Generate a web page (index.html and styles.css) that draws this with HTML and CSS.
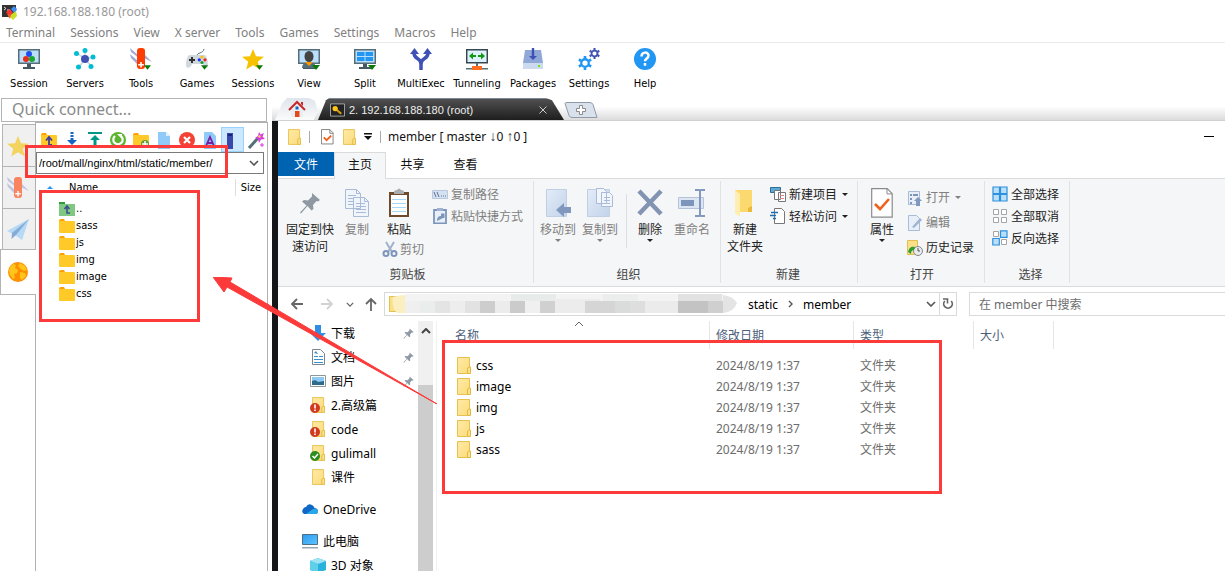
FILE: index.html
```html
<!DOCTYPE html>
<html lang="zh-CN">
<head>
<meta charset="utf-8">
<title>192.168.188.180 (root)</title>
<link rel="stylesheet" href="styles.css">
</head>
<body>
<svg class="defs" aria-hidden="true">
  <defs>
    <linearGradient id="gFold" x1="0" y1="0" x2="1" y2="1"><stop offset="0" stop-color="#ffeaa6"/><stop offset="1" stop-color="#fbdc7c"/></linearGradient>
    <linearGradient id="gScreen" x1="0" y1="0" x2="1" y2="1"><stop offset="0" stop-color="#2c9bf0"/><stop offset="1" stop-color="#5cc4ff"/></linearGradient>
    <linearGradient id="gPage" x1="0" y1="0" x2="1" y2="1"><stop offset="0" stop-color="#e3ecf8"/><stop offset="1" stop-color="#c3d3ea"/></linearGradient>
  </defs>
  <symbol id="monitor" viewBox="0 0 22 22"><path d="M0 1h22v15H0z" fill="#546e7a"/><path d="M1.500 2.500h19v12h-19z" fill="#bbdefb"/><path d="M9 16h4v3H9zM5 19h12v2H5z" fill="#455a64"/></symbol>
  <symbol id="drop" viewBox="0 0 8 5"><path d="M0 0h8L4 5z" fill="#0b7a0b"/></symbol>
  <symbol id="folder" viewBox="0 0 14 17"><path d="M.5.500h12v16H.5z" fill="url(#gFold)" stroke="#e8c04e"/><path d="M10.500 16.500V11l1.500-1h1.500v6.500z" fill="#fbe08a" stroke="#e2b940"/></symbol>
  <symbol id="yfolder" viewBox="0 0 16 14"><path d="M0 2q0-2 2-2h3l1 2h9v6H0z" fill="#ffa000"/><rect y="2" width="16" height="12" rx="1" fill="#ffca28"/></symbol>
  <symbol id="pin" viewBox="0 0 22 22"><path d="M13 1l8 7-2 1.500-1.500-.5-3.500 4 .5 4-2 1.500-4-4.500-6 7-1.500.5.5-1.500 6-6.500L3 9.500l2-1.500 4 .5 4-4z" fill="#8e99a4"/></symbol>
  <symbol id="knife" viewBox="0 0 22 22"><path d="M0 0l9 8v2L1 4zM0 6l9 8v4L1 10zM14 6l8 8-8-4z" fill="#9fa8da"/><rect x="7" y="0" width="8" height="21" rx="3" fill="#ff3d00"/><path d="M10.200 14h1.600v2h2v1.600h-2v2h-1.600v-2h-2V16h2z" fill="#fff"/></symbol>
  <symbol id="star" viewBox="0 0 22 22"><path d="M11 1l3 7.200 8 .5-6.200 5 2 7.800L11 17.200 4.200 21.500l2-7.800L0 8.700l8-.5z" fill="#f6c200"/></symbol>
  <symbol id="docs" viewBox="0 0 26 30"><g fill="#f0f5fc" stroke="#a9bbd6"><path d="M1.500 1.500h11l4 4v15h-15zM9.500 9.500h11l4 4v15h-15z"/><path d="M12.500 1.500v4h4M20.500 9.500v4h4" fill="none"/></g><path d="M4 7.500h8M4 10.500h5M4 13.500h5M4 16.500h5M12 15.500h9M12 18.500h10M12 21.500h10M12 24.500h10" stroke="#a9bbd6"/></symbol>
  <symbol id="caret" viewBox="0 0 6 3"><path d="M0 0h6L3 3z" fill="currentColor"/></symbol>
  <symbol id="chev" viewBox="0 0 10 6"><path d="M1 1l4 4 4-4" fill="none" stroke="currentColor" stroke-width="1.600"/></symbol>
  <symbol id="gear" viewBox="0 0 16 16"><circle cx="8" cy="8" r="4.300" fill="none" stroke="currentColor" stroke-width="2.600"/><g stroke="currentColor" stroke-width="3"><path d="M8 0v3M8 13v3M1 4l2.600 1.500M12.400 10.500L15 12M1 12l2.600-1.500M12.400 5.500L15 4"/></g></symbol>
  <symbol id="check" viewBox="0 0 22 30"><path d="M.7.700h15.500l5 5v23.500H.7z" fill="#fff" stroke="#8a8a8a" stroke-width="1.200"/><path d="M16 .7v5.200h5" fill="none" stroke="#8a8a8a"/><path d="M4 16l5 5L18 11" fill="none" stroke="#f0611c" stroke-width="2.600"/></symbol>
</svg>

<div class="app">
  <header class="titlebar">
    <svg class="i16" viewBox="0 0 16 16"><path d="M0 1h14v12H0z" fill="#333"/><path d="M2 3l2 1.500L2 6M5 6h3" stroke="#ddd" fill="none"/><path d="M4 8l4-3 3 4-4 3z" fill="#f33"/><path d="M9 5l3-3 3 3-2 5z" fill="#3b8ff5"/><path d="M7 12l7-5 1 5-4 4z" fill="#c6e02a"/><path d="M5 10l4 1-1 4z" fill="#ff5a2a"/></svg>
    <span>192.168.188.180 (root)</span>
  </header>
  <nav class="menubar">
    <button>Terminal</button><button>Sessions</button><button>View</button><button>X server</button><button>Tools</button><button>Games</button><button>Settings</button><button>Macros</button><button>Help</button>
  </nav>
  <div class="toolbar">
    <button><svg viewBox="0 0 22 22"><use href="#monitor"/><circle cx="11" cy="6" r="3" fill="#1e50f0"/><circle cx="8" cy="11" r="3" fill="#e53020"/><circle cx="14" cy="11" r="3" fill="#17a82e"/></svg>Session</button>
    <button><svg viewBox="0 0 22 22"><path d="M11 11V3M11 11L3 5M11 11l8-2M11 11L5 19M11 11l6 7" stroke="#c5d5dd" stroke-width="1.500"/><circle cx="11" cy="11" r="4" fill="#3f51b5"/><g fill="#00bcd4"><circle cx="11" cy="2.500" r="2.500"/><circle cx="2.500" cy="5.500" r="2.500"/><circle cx="19" cy="9" r="2.500"/><circle cx="4.500" cy="19" r="2.500"/><circle cx="17" cy="18.500" r="2.500"/></g></svg>Servers</button>
    <button><svg viewBox="0 0 22 22"><use href="#knife"/><use href="#drop" x="14" y="17" width="7" height="5"/></svg>Tools</button>
    <button><svg viewBox="0 0 22 22"><path d="M11 8c0-4 6-2 7-7" fill="none" stroke="#546e7a"/><path d="M4 7h14c3 0 4 6 4 11 0 3-4 2-5-2H6c-1 4-5 5-6 2 0-5 1-11 4-11z" fill="#cfd8dc"/><path d="M5 9h2v2h2v2H7v2H5v-2H3v-2h2z" fill="#333"/><circle cx="16" cy="9" r="1.600" fill="#ffc107"/><circle cx="13.300" cy="11.800" r="1.600" fill="#2030ff"/><circle cx="19" cy="11.800" r="1.600" fill="#e22"/><circle cx="16" cy="14.500" r="1.600" fill="#17a02e"/><use href="#drop" x="15" y="17" width="7" height="5"/></svg>Games</button>
    <button><svg viewBox="0 0 22 22"><use href="#star"/><use href="#drop" x="14" y="17" width="7" height="5"/></svg>Sessions</button>
    <button><svg viewBox="0 0 22 22"><use href="#monitor"/><path d="M4 20q0-6 7-6t7 6z" fill="#546e7a"/><path d="M7 14h8l-4 4z" fill="#ff9800"/><ellipse cx="11" cy="8.500" rx="4.500" ry="5.500" fill="#424242"/><use href="#drop" x="14" y="17" width="8" height="5"/></svg>View</button>
    <button><svg viewBox="0 0 22 22"><use href="#monitor"/><path d="M3 4h7.500v4H3zM11.500 4H19v4h-7.500zM3 9h7.500v4H3zM11.500 9H19v4h-7.500z" fill="#2196f3"/><use href="#drop" x="14" y="17" width="8" height="5"/></svg>Split</button>
    <button><svg viewBox="0 0 22 22"><path d="M4 5c0 7 7 4 7 11v6V16c0-7 7-4 7-11" fill="none" stroke="#3f51b5" stroke-width="3.500"/><path d="M0 6l4.500-6L9 6zM13 6l4.500-6L22 6z" fill="#3f51b5"/></svg>MultiExec</button>
    <button><svg viewBox="0 0 22 22"><path d="M.7 1.700h20.600v13H.7z" fill="#dff0ff" stroke="#37474f" stroke-width="1.500"/><path d="M3 8l4-3.500V7h3v2H7v2.500zM19 8l-4-3.500V7h-3v2h3v2.500z" fill="#109a10"/><path d="M10 15h2v4h-2zM0 20h22v1.500H0z" fill="#546e7a"/><path d="M6 18h10v4H6z" fill="#ff6d1f"/></svg>Tunneling</button>
    <button><svg viewBox="0 0 22 22"><path d="M3 2h16l2 13H1z" fill="#90a8d8"/><path d="M1 15h20v6H1z" fill="#cdd9ef"/><path d="M9.800 0h2.400v8H15l-4 4-4-4h2.800z" fill="#3f51b5"/><path d="M16 17h2v2h-2z" fill="#6e1"/></svg>Packages</button>
    <button><svg viewBox="0 0 22 22"><use href="#gear" x="0" y="8" width="14" height="14" color="#2196f3"/><use href="#gear" x="11" y="0" width="11" height="11" color="#3f51b5"/></svg>Settings</button>
    <button><svg viewBox="0 0 22 22"><circle cx="11" cy="11" r="11" fill="#2196f3"/><path d="M7.500 8.500c0-5 7-5 7-1 0 3-3.500 3-3.500 5.800M11 15v2.800" fill="none" stroke="#fff" stroke-width="2.500"/></svg>Help</button>
  </div>

  <div class="work">
    <aside class="left">
      <input class="quick" type="text" placeholder="Quick connect..." aria-label="Quick connect">
      <div class="leftbody">
        <div class="vtabs">
          <button aria-label="Favourites"><svg viewBox="0 0 22 22"><use href="#star"/></svg></button>
          <button aria-label="Tools"><svg viewBox="0 0 22 22"><use href="#knife"/></svg></button>
          <button aria-label="Macros"><svg viewBox="0 0 22 22"><path d="M0 12L22 0 15 21l-7-5z" fill="#90caf9"/><path d="M22 0L5 14l-.5 6L9 16z" fill="#3f7fc8"/></svg></button>
          <button class="on" aria-label="Sftp"><svg viewBox="0 0 22 22"><circle cx="11" cy="11" r="10" fill="#ff8f00"/><path d="M3 6l3-3 3 1-1 3 3 2-1 3-3 1 1 4-2 1-3-4-1-4zM13 2l5 3 2 4-3 1-3-2-3-3zM13 11l5 1 1 3-4 4-2-2z" fill="#ffc51a"/></svg></button>
        </div>
        <div class="sftp">
          <div class="sftpbar">
            <button aria-label="Up"><svg viewBox="0 0 18 18"><use href="#yfolder" x="1" y="2" width="16" height="14"/><path d="M12 14H9V7M6 9.500L9 6l3 3.500" fill="none" stroke="#3c3f9c" stroke-width="1.800"/></svg></button>
            <button aria-label="Download"><svg viewBox="0 0 18 18"><path d="M9 1v8" stroke="#1565c0" stroke-width="3" stroke-dasharray="2 1"/><path d="M4 9h10l-5 5zM4 15h10v1H4z" fill="#1565c0"/></svg></button>
            <button aria-label="Upload"><svg viewBox="0 0 18 18"><path d="M2 1h14v2H2zM9 4l5 5h-3.500v7h-3V9H4z" fill="#009688"/></svg></button>
            <button aria-label="Refresh"><svg viewBox="0 0 18 18"><circle cx="9" cy="9" r="8" fill="#5cb531"/><path d="M6 5a4.700 4.700 0 1 0 6 0" fill="none" stroke="#fff" stroke-width="2.200"/><path d="M8 3h5v5z" fill="#fff"/></svg></button>
            <button aria-label="New folder"><svg viewBox="0 0 18 18"><use href="#yfolder" x="1" y="2" width="16" height="14"/><circle cx="13" cy="13" r="4" fill="#5f9c3a"/><path d="M13 10v6M10 13h6" stroke="#fff" stroke-width="1.500"/></svg></button>
            <button aria-label="New file"><svg viewBox="0 0 18 18"><path d="M3 1h8l4 4v13H3z" fill="#90caf9"/><path d="M11 1v4h4z" fill="#e1f0ff"/></svg></button>
            <button aria-label="Delete"><svg viewBox="0 0 18 18"><circle cx="9" cy="9" r="8" fill="#f44336"/><path d="M6 6l6 6M12 6l-6 6" stroke="#fff" stroke-width="2.200"/></svg></button>
            <button aria-label="Rename"><svg viewBox="0 0 18 18"><path d="M3 1h8l4 4v13H3z" fill="#90caf9"/><path d="M5 15l4-9 4 9M6.500 12h5" fill="none" stroke="#7b1fa2" stroke-width="1.800"/></svg></button>
            <button class="on" aria-label="Terminal"><svg viewBox="0 0 18 18"><path d="M3 2h6v16H3z" fill="#3949ab"/><path d="M4 3h4v2H4z" fill="#1a237e"/></svg></button>
            <button aria-label="Wand"><svg viewBox="0 0 18 18"><path d="M2 17L11 7" stroke="#546e7a" stroke-width="3"/><path d="M12 1l1.500 2.500L17 2l-1.500 3.500L18 8l-4 .5L12 12l-1-4-3-1 3-2z" fill="#d63be0"/><path d="M12 4l2 1-1 2-2-1z" fill="#ffd54f"/><path d="M15 12v4M13 14h4" stroke="#d63be0"/></svg></button>
          </div>
          <div class="path"><input type="text" value="/root/mall/nginx/html/static/member/" aria-label="Path"><svg class="pathchev"><use href="#chev"/></svg></div>
          <div class="sftphead"><svg viewBox="0 0 6 3"><path d="M0 3h6L3 0z" fill="#2196f3"/></svg><span class="name">Name</span><span class="size">Size</span></div>
          <ul class="sftplist">
            <li><svg viewBox="0 0 16 14"><path d="M0 0h6v3H0z" fill="#2e9a3c"/><path d="M0 2h16v12H0z" fill="#81c784"/><path d="M11 11H8V5M5.500 7L8 4l2.500 3" fill="none" stroke="#3c4f8c" stroke-width="1.600"/></svg>..</li>
            <li><svg><use href="#yfolder"/></svg>sass</li>
            <li><svg><use href="#yfolder"/></svg>js</li>
            <li><svg><use href="#yfolder"/></svg>img</li>
            <li><svg><use href="#yfolder"/></svg>image</li>
            <li><svg><use href="#yfolder"/></svg>css</li>
          </ul>
        </div>
      </div>
    </aside>

    <main class="right">
      <div class="tabs">
        <button class="tab home" aria-label="Home"><svg viewBox="0 0 18 18"><path d="M3 9h12v8H3z" fill="#e8eef2"/><path d="M1 10l8-8 8 8" fill="none" stroke="#c62828" stroke-width="2"/><path d="M13 2h2v4l-2-2z" fill="#c62828"/><path d="M7 11h4.500v6H7z" fill="#e64a19"/><path d="M7.500 6.500h3v3h-3z" fill="#1565c0"/></svg></button>
        <button class="tab active"><svg viewBox="0 0 16 14"><path d="M.5.500h15v13H.5z" fill="#222" stroke="#a8a8a8"/><path d="M6 6l6 5" stroke="#d99a14" stroke-width="2.200"/><circle cx="5.500" cy="5.500" r="2.800" fill="#ffc61a"/></svg><span>2. 192.168.188.180 (root)</span><svg class="x" viewBox="0 0 8 8"><path d="M.5.500l7 7M7.500.500l-7 7" stroke="#ccc"/></svg></button>
        <button class="tab plus" aria-label="New tab"><svg viewBox="0 0 34 16"><path d="M1 1.500q0-1 2-1h23q2 0 3 2l4 13H8q-2 0-3-2z" fill="#d9e2ec" stroke="#8f9aa6"/><path d="M15.500 3.500h3v3h3v3h-3v3h-3v-3h-3v-3h3z" fill="#fff" stroke="#8b8b8b"/></svg></button>
      </div>

      <section class="explorer">
        <div class="exptitle">
          <svg class="f"><use href="#folder"/></svg><i class="bar"></i>
          <svg class="ck" viewBox="0 0 14 17"><path d="M.5.500h9l3.500 3.500v12H.5z" fill="#fff" stroke="#7d7d7d"/><path d="M9.500.500v4H13" fill="none" stroke="#7d7d7d"/><path d="M3 9l3 3 5-5" fill="none" stroke="#f0611c" stroke-width="2"/></svg>
          <svg class="f"><use href="#folder"/></svg>
          <svg class="qd" viewBox="0 0 8 7"><path d="M0 0h8v1.500H0zM0 3h8L4 7z" fill="#111"/></svg><i class="bar"></i>
          <span class="ttl">member [ master <span class="ar">↓</span>0 <span class="ar">↑</span>0 ]</span>
          <button class="min" aria-label="Minimize"></button>
        </div>
        <div class="rtabs"><button class="file">文件</button><button class="cur">主页</button><button>共享</button><button>查看</button></div>

        <div class="ribbon">
          <div class="grp g1">
            <div class="gc">
              <button class="big w56"><svg class="sq"><use href="#pin"/></svg>固定到快<br>速访问</button>
              <button class="big w38 off"><svg><use href="#docs"/></svg>复制</button>
              <div class="col paste">
                <button class="big w46"><svg viewBox="0 0 22 30"><path d="M1 4h20v25H1z" fill="#6d4a2c"/><path d="M3 7h16v20H3z" fill="#fff"/><path d="M6 4q0-2 3-2 2-3 4 0 3 0 3 2v2H6z" fill="#a9adb2"/><path d="M4 11.500h14M4 15.500h14M4 19.500h14M4 23.500h14" stroke="#a7d8f5"/></svg>粘贴</button>
                <button class="sm off"><svg viewBox="0 0 16 16"><path d="M4 1l6 10M12 1L6 11" stroke="#9fb1cc" stroke-width="2"/><g fill="none" stroke="#7e95bb" stroke-width="2"><circle cx="4" cy="12.500" r="2.500"/><circle cx="12" cy="12.500" r="2.500"/></g></svg>剪切</button>
              </div>
              <div class="col stack">
                <button class="sm off"><svg viewBox="0 0 16 16"><path d="M.5 4.500h15v8H.5z" fill="#d5e0f0" stroke="#b9c8df"/><path d="M2 6l2 5M5 6l2 5M9 10h1M11 10h1M13 10h1" stroke="#5f7597"/></svg>复制路径</button>
                <button class="sm off"><svg viewBox="0 0 16 16"><path d="M2 2h12v13.500H2z" fill="#e8eff8" stroke="#7e95bb" stroke-width="1.800"/><path d="M5 0h6v3H5z" fill="#9fb1cc"/><path d="M5 13c0-4 2-5 4-5V5.500h3.500V10H11" fill="#7e95bb"/></svg>粘贴快捷方式</button>
              </div>
            </div>
            <div class="gl">剪贴板</div>
          </div>
          <div class="grp g2">
            <div class="gc">
              <button class="big w42 off"><svg viewBox="0 0 26 30"><path d="M1.500 1.500h20v27h-20z" fill="url(#gPage)" stroke="#c0cfe4"/><path d="M11 22l8-7v4h7v6h-7v4z" fill="#8098bd"/></svg>移动到<svg class="car"><use href="#caret"/></svg></button>
              <button class="big w42 off"><svg viewBox="0 0 26 30"><path d="M.5 1.500h22v27H.5z" fill="url(#gPage)" stroke="#c0cfe4"/><path d="M9.500.500h7l3 3v12h-10zM14.500 4.500h8l3 3v11h-11z" fill="#f2f6fc" stroke="#a9bbd6"/><path d="M17 9.500h6M17 12.500h6M17 15.500h6" stroke="#a9bbd6"/></svg>复制到<svg class="car"><use href="#caret"/></svg></button>
              <i class="vbar"></i>
              <button class="big w46"><svg viewBox="0 0 26 30"><path d="M2 3l22 23M24 3L2 26" stroke="#8294b2" stroke-width="4.500"/></svg>删除<svg class="car"><use href="#caret"/></svg></button>
              <button class="big w38 off"><svg class="wide" viewBox="0 0 28 30"><path d="M.5 9.500h25v11H.5z" fill="#dce6f3" stroke="#b4c3da"/><path d="M3 12h13v6H3z" fill="#7e95bb"/><path d="M17 2h4q1 0 1 2v22q0 2-1 2h-4M27 2h-4q-1 0-1 2M27 28h-4q-1 0-1-2" fill="none" stroke="#8299bd" stroke-width="2"/></svg>重命名</button>
            </div>
            <div class="gl">组织</div>
          </div>
          <div class="grp g3">
            <div class="gc">
              <button class="big w44"><svg viewBox="0 0 22 30"><path d="M1 2h17v22H1z" fill="#fbd96f"/><path d="M1 2l5 4v23l-5-4z" fill="#ffeeb0"/><path d="M14 20l4-2v6h-4z" fill="#e9b93c"/></svg>新建<br>文件夹</button>
              <div class="col tight">
                <button class="sm"><svg viewBox="0 0 16 16"><path d="M.5 1.500h10v5H.5z" fill="#5aa9d8" stroke="#2f6f96"/><path d="M4.500 4.500h6v9h-6zM8.500 6.500h7v9h-7z" fill="#fff" stroke="#777"/><path d="M10 9.500h4M10 12.500h4" stroke="#d88"/></svg>新建项目<svg class="car"><use href="#caret"/></svg></button>
                <button class="sm"><svg viewBox="0 0 16 16"><path d="M4.500.500h7l3 3v12h-10z" fill="#fff" stroke="#777"/><path d="M1 4.500h7M0 7.500h6M3 10.500h3" stroke="#1d6fb8" stroke-width="1.500"/></svg>轻松访问<svg class="car"><use href="#caret"/></svg></button>
              </div>
            </div>
            <div class="gl">新建</div>
          </div>
          <div class="grp g4">
            <div class="gc">
              <button class="big w44"><svg><use href="#check"/></svg>属性<svg class="car"><use href="#caret"/></svg></button>
              <div class="col loose">
                <button class="sm off"><svg viewBox="0 0 16 16"><path d="M1.500 1.500h11v13h-11z" fill="#e8eff8" stroke="#a9bbd6"/><path d="M3 4h2v2H3zM3 8h2v2H3zM3 12h2v2H3zM6 4h5v2H6z" fill="#7e95bb"/><path d="M7 11l4-4 4 4h-2v5H9v-5z" fill="#8098bd"/></svg>打开<svg class="car"><use href="#caret"/></svg></button>
                <button class="sm off"><svg viewBox="0 0 16 16"><path d="M1.500.500h8l3 3v12h-11z" fill="#e8eff8" stroke="#a9bbd6"/><path d="M5 12l8-9 2 2-8 8z" fill="#9fb4d3"/></svg>编辑</button>
                <button class="sm"><svg viewBox="0 0 16 16"><path d="M.5.500h10v14H.5z" fill="#fbe08a" stroke="#e2c050"/><circle cx="11" cy="11" r="4.500" fill="#e9ecee" stroke="#888"/><path d="M11 8v3h2" fill="none" stroke="#555"/><path d="M1 12c1-5 4-6 7-5l-1 3c-2 0-3 1-3 4z" fill="#2f9e2f"/></svg>历史记录</button>
              </div>
            </div>
            <div class="gl">打开</div>
          </div>
          <div class="grp g5">
            <div class="gc">
              <div class="col sel">
                <button class="sm"><svg viewBox="0 0 16 16"><path d="M1 1h6.500v6.500H1zM8.500 1H15v6.500H8.500zM1 8.500h6.500V15H1zM8.500 8.500H15V15H8.500z" fill="#b9e0fb" stroke="#2e8fdc" stroke-width="1.200"/></svg>全部选择</button>
                <button class="sm"><svg viewBox="0 0 16 16"><path d="M1.500 1.500h5v5h-5zM9.500 1.500h5v5h-5zM1.500 9.500h5v5h-5zM9.500 9.500h5v5h-5z" fill="#fff" stroke="#a5a5a5"/></svg>全部取消</button>
                <button class="sm"><svg viewBox="0 0 16 16"><path d="M1.500 1.500h5v5h-5zM9.500 9.500h5v5h-5z" fill="#fff" stroke="#a5a5a5"/><path d="M8.500.800H15v6.500H8.500zM.8 8.500h6.500V15H.8z" fill="#b9e0fb" stroke="#2e8fdc" stroke-width="1.200"/></svg>反向选择</button>
              </div>
            </div>
            <div class="gl">选择</div>
          </div>
        </div>

        <div class="navrow">
          <div class="navbtns">
            <button aria-label="Back"><svg viewBox="0 0 14 14"><path d="M13 7H2M7 2L2 7l5 5" fill="none" stroke="#666" stroke-width="1.800"/></svg></button>
            <button aria-label="Forward"><svg viewBox="0 0 14 14"><path d="M1 7h11M7 2l5 5-5 5" fill="none" stroke="#d2d2d2" stroke-width="1.800"/></svg></button>
            <button class="nar" aria-label="Recent"><svg class="mini" viewBox="0 0 10 6"><use href="#chev" width="10" height="6"/></svg></button>
            <button aria-label="Up one level"><svg viewBox="0 0 14 14"><path d="M7 14V2M2 7l5-5 5 5" fill="none" stroke="#666" stroke-width="1.800"/></svg></button>
          </div>
          <div class="addr">
            <svg class="mosaic" viewBox="0 0 350 20">
              <path d="M.5 2.500h8v15h-8z" fill="#fbe08a" stroke="#e2c050"/><path d="M4 3q6-2 12-2v18H8q-6-6-4-16z" fill="#fbeebf"/>
              <path d="M16 0h318v8H16z" fill="#f3f3f3"/><path d="M122 0h45v8h-45z" fill="#e7eceb"/><path d="M214 0h35v8h-35z" fill="#eceeee"/><path d="M289 0h44v8h-44z" fill="#e2e2e2"/>
              <path d="M16 7h15v12H16z" fill="#efefef"/><path d="M31 7h15v12H31z" fill="#e9eeed"/><path d="M46 7h15v12H46z" fill="#e4e4e4"/><path d="M61 7h15v12H61z" fill="#ededed"/><path d="M76 7h15v12H76z" fill="#e2e2e2"/><path d="M91 7h15v12H91z" fill="#cdcdcd"/><path d="M106 7h15v12h-15z" fill="#ececec"/><path d="M121 7h15v12h-15z" fill="#cbcbcb"/><path d="M136 7h15v12h-15z" fill="#f0f0f0"/><path d="M166 5h45v14h-45z" fill="#ececec"/><path d="M151 7h15v12h-15z" fill="#d0d0d0"/><path d="M196 7h30v12h-30z" fill="#d5d5d5"/><path d="M226 7h15v12h-15z" fill="#dadcdc"/><path d="M241 7h15v12h-15z" fill="#dedede"/><path d="M256 7h33v12h-33z" fill="#ebebeb"/><path d="M289 7h30v12h-30z" fill="#c3c3c3"/><path d="M319 7h15v12h-15z" fill="#cfcfcf"/><path d="M334 1q10 1 14 8-3 9-14 10z" fill="#e4e4e4"/>
            </svg>
            <span>static</span><svg class="sep" viewBox="0 0 5 8"><path d="M1 1l3 3-3 3" fill="none" stroke="#555" stroke-width="1.400"/></svg><span>member</span>
            <button class="ddl" aria-label="History"><svg viewBox="0 0 10 6"><use href="#chev" width="10" height="6"/></svg></button>
            <button class="rf" aria-label="Refresh"><svg viewBox="0 0 12 12"><path d="M2.800 3a4.300 4.300 0 1 0 6.400 0" fill="none" stroke="#666" stroke-width="1.700"/><path d="M1 1h4.500v4.500" fill="none" stroke="#666" stroke-width="1.600"/></svg></button>
          </div>
          <input class="search" type="text" placeholder="在 member 中搜索" aria-label="搜索">
        </div>

        <div class="expbody">
          <ul class="tree">
            <li><svg viewBox="0 0 16 18"><path d="M5 1h6v8h5l-8 8-8-8h5z" fill="#2f8fe4"/></svg>下载<svg class="pn"><use href="#pin"/></svg></li>
            <li><svg viewBox="0 0 16 18"><path d="M2.500 1.500h8l4 4v11h-12z" fill="#fff" stroke="#7d868d"/><path d="M4 8.500h4M4 11.500h9M4 14.500h9M9 8.500h4" stroke="#3a8fce"/><path d="M4 5l2-2 2 3z" fill="#3a8fce"/></svg>文档<svg class="pn"><use href="#pin"/></svg></li>
            <li><svg viewBox="0 0 16 18"><path d="M.5 3.500h15v11H.5z" fill="#fff" stroke="#8d969c"/><path d="M2 5h12v8H2z" fill="#8ec9f5"/><path d="M2 9q4-2 6 1l6-1v4H2z" fill="#2e6b8a"/></svg>图片<svg class="pn"><use href="#pin"/></svg></li>
            <li><svg viewBox="0 0 16 18"><use href="#folder" x="2" y="1" width="13" height="16"/><circle cx="5" cy="12" r="5" fill="#d03a1e"/><path d="M4.200 8.500h1.600v4H4.200zM4.200 13.500h1.600v1.500H4.200z" fill="#fff"/></svg>2.高级篇</li>
            <li><svg viewBox="0 0 16 18"><use href="#folder" x="2" y="1" width="13" height="16"/><circle cx="5" cy="12" r="5" fill="#d03a1e"/><path d="M4.200 8.500h1.600v4H4.200zM4.200 13.500h1.600v1.500H4.200z" fill="#fff"/></svg>code</li>
            <li><svg viewBox="0 0 16 18"><use href="#folder" x="2" y="1" width="13" height="16"/><circle cx="5" cy="12" r="5" fill="#2e8b1e"/><path d="M2.500 12l2 2 3.500-4" fill="none" stroke="#fff" stroke-width="1.500"/></svg>gulimall</li>
            <li><svg viewBox="0 0 16 18"><use href="#folder" x="2" y="1" width="13" height="16"/></svg>课件</li>
            <li class="root"><svg viewBox="0 0 16 18"><path d="M2 14q-3-2-1-5 1-2 3-2 2-4 6-2 2 1 2.500 3 3 0 3.500 3 0 3-3 3z" fill="#0f68c4"/><path d="M4 14l7-5q4-1 5 2 0 3-3 3z" fill="#28a8ea"/></svg>OneDrive</li>
            <li class="root"><svg viewBox="0 0 16 18"><path d="M.5 2.500h15v10H.5z" fill="url(#gScreen)" stroke="#4f6f87"/><path d="M0 15h16v1.500H0z" fill="#9aa7b1"/></svg>此电脑</li>
            <li><svg viewBox="0 0 16 18"><path d="M0 5l8-3 8 3v9l-8 3-8-3z" fill="#27b3dc"/><path d="M0 5l8-3 8 3-8 3z" fill="#9fe4f5"/><path d="M0 5l8 3v9l-8-3z" fill="#5fd0ea"/></svg>3D 对象</li>
          </ul>
          <div class="scroll"><svg viewBox="0 0 10 6"><path d="M1 5l4-4 4 4" fill="none" stroke="#444" stroke-width="2"/></svg><i></i></div>
          <div class="files">
            <table>
              <colgroup><col class="c1"><col class="c2"><col class="c3"><col class="c4"><col></colgroup>
              <thead><tr><th>名称<svg class="sort" viewBox="0 0 10 6"><path d="M1 5l4-4 4 4" fill="none" stroke="#666"/></svg></th><th>修改日期</th><th>类型</th><th>大小</th><th class="last"></th></tr></thead>
              <tbody>
                <tr><td><svg><use href="#folder"/></svg>css</td><td>2024/8/19 1:37</td><td>文件夹</td><td></td><td></td></tr>
                <tr><td><svg><use href="#folder"/></svg>image</td><td>2024/8/19 1:37</td><td>文件夹</td><td></td><td></td></tr>
                <tr><td><svg><use href="#folder"/></svg>img</td><td>2024/8/19 1:37</td><td>文件夹</td><td></td><td></td></tr>
                <tr><td><svg><use href="#folder"/></svg>js</td><td>2024/8/19 1:37</td><td>文件夹</td><td></td><td></td></tr>
                <tr><td><svg><use href="#folder"/></svg>sass</td><td>2024/8/19 1:37</td><td>文件夹</td><td></td><td></td></tr>
              </tbody>
            </table>
          </div>
        </div>
      </section>
    </main>
  </div>

  <div class="mark m1"></div>
  <div class="mark m2"></div>
  <div class="mark m3"></div>
  <svg class="arrow" viewBox="0 0 224 127"><path d="M0 0l19 1-2 4 207 122L14 10l-3 5z" fill="#fc3a3a" stroke="#fc3a3a"/></svg>
</div>
</body>
</html>
```
FILE: styles.css
```css
* { box-sizing: border-box; }
body { margin: 0; background: #fff; color: #111; font: 12px/17px "Noto Sans", "Noto Sans CJK SC", sans-serif; }
button { border: 0; padding: 0; margin: 0; background: none; font: inherit; color: inherit; white-space: nowrap; }
input { font: inherit; outline: 0; border-radius: 0; min-width: 0; }
ul { list-style: none; margin: 0; padding: 0; }
svg { display: block; flex: none; }
.defs { position: absolute; width: 0; height: 0; }
.app { position: relative; height: 100vh; overflow: hidden; display: flex; flex-direction: column; }

.titlebar { display: flex; align-items: center; gap: 5px; height: 23px; padding-left: 2px; color: #999; }
.i16 { width: 16px; height: 16px; }
.menubar { display: flex; gap: 15px; height: 20px; padding: 1px 6px; color: #808080; border-bottom: 1px solid #ececec; }
.toolbar { display: flex; padding: 5px 0 6px 1px; font: 11px/14px "DejaVu Sans Condensed", "DejaVu Sans", sans-serif; color: #000; }
.toolbar button { width: 56px; display: flex; flex-direction: column; align-items: center; gap: 7px; }
.toolbar svg { width: 22px; height: 22px; }

.work { flex: 1; min-height: 0; display: flex; }
.left { width: 272px; flex: none; display: flex; flex-direction: column; }
.quick { width: 266px; height: 24px; margin: 1px 0 0 1px; padding: 0 0 2px 10px; border: 1px solid #b4b4b4; font-size: 16px; background: #fff; }
.quick::placeholder { color: #8a8a8a; opacity: 1; }
.leftbody { flex: 1; display: flex; min-height: 0; }
.vtabs { width: 36px; border-right: 1px solid #b0b0b0; padding-top: 2px; display: flex; flex-direction: column; }
.vtabs button { height: 42px; margin-left: 2px; background: #f0f0f0; border: 1px solid #b4b4b4; border-width: 1px 0 0 1px; padding-right: 2px; display: grid; place-items: center; }
.vtabs svg { width: 22px; height: 22px; opacity: .6; }
.vtabs .on { height: 46px; margin: -1px -1px 0 0; background: #fff; border-width: 1px 0 1px 1px; }
.vtabs .on svg { opacity: 1; }
.sftp { flex: 1; margin-right: 4px; border: 1px solid #b0b0b0; border-width: 1px 1px 0 0; font: 11px/17px "DejaVu Sans Condensed", "DejaVu Sans", sans-serif; color: #000; }
.sftpbar { display: flex; height: 29px; padding: 4px 0 0 1px; }
.sftpbar button { width: 23px; height: 25px; display: grid; place-items: center; }
.sftpbar svg { width: 18px; height: 18px; }
.sftpbar .on { background: #cce8ff; border: 1px solid #99d1ff; }
.path { display: flex; align-items: center; height: 22px; margin-right: 3px; border: 1px solid #7a7a7a; background: #fff; padding-right: 4px; }
.path input { flex: 1; border: 0; padding: 0 2px; font: 11px/17px "Liberation Sans", sans-serif; }
.pathchev { width: 10px; height: 6px; color: #555; }
.sftphead { display: flex; align-items: center; height: 26px; padding-left: 11px; }
.sftphead svg { width: 6px; height: 3px; }
.sftphead .name { flex: 1; padding-left: 16px; }
.sftphead .size { border-left: 1px solid #ddd; padding: 0 6px 0 5px; }
.sftplist li { display: flex; align-items: center; height: 17px; padding-left: 23px; gap: 1px; font-size: 11px; }
.sftplist svg { width: 16px; height: 14px; }

.right { flex: 1; min-width: 0; display: flex; flex-direction: column; }
.tabs { display: flex; align-items: flex-end; height: 24px; padding-left: 3px; background: linear-gradient(#fff 40%, #dcdcdc); border-bottom: 1px solid #d0d0d0; font: 11px/14px "Liberation Sans", sans-serif; }
.tab { display: flex; align-items: center; height: 22px; }
.home { width: 43px; justify-content: center; background: linear-gradient(#dfe5ec, #fbfbfb); clip-path: polygon(0 100%, 7px 25%, 12px 0, 34px 0, 40px 12%, 100% 60%, 90% 100%); }
.home svg { width: 18px; height: 18px; }
.active { width: 246px; padding: 0 17px 0 12px; gap: 4px; color: #eee; background: linear-gradient(#505050, #1e1e1e); border-top: 1px solid #7c8796; clip-path: polygon(0 100%, 8px 10%, 11px 0, 228px 0, 234px 10%, 100% 100%); }
.active svg { width: 15px; height: 14px; }
.active .x { width: 8px; height: 8px; margin-left: auto; }
.plus { height: 20px; }
.plus svg { width: 34px; height: 16px; }

.explorer { flex: 1; min-height: 0; border-left: 6px solid #15161a; background: #fff; display: flex; flex-direction: column; overflow: hidden; }
.exptitle { display: flex; align-items: center; height: 31px; padding-left: 10px; flex: none; }
.exptitle .f { width: 13px; height: 16px; }
.exptitle .bar { width: 1px; height: 12px; background: #aaa; margin: 0 11px 0 8px; }
.exptitle .bar + .ttl { margin-left: -4px; }
.ck { width: 13px; height: 16px; margin-right: 9px; }
.qd { width: 8px; height: 7px; margin-left: 8px; }
.ttl { flex: 1; color: #111; }
.ar { font: 14px/17px "Liberation Sans", sans-serif; color: #444; }
.min { width: 32px; height: 20px; }
.min::before { content: ""; display: block; width: 10px; height: 1px; margin-left: 11px; background: #000; }
.rtabs { display: flex; height: 27px; flex: none; border-bottom: 1px solid #dadbdc; }
.rtabs button { width: 53px; height: 24px; }
.rtabs .file { width: 56px; background: #0063b1; color: #fff; }
.rtabs .cur { height: 27px; width: 52px; padding-bottom: 3px; background: #f5f6f7; border: 1px solid #dadbdc; border-bottom: 0; }

.ribbon { display: flex; flex: none; height: 108px; background: #f5f6f7; border-bottom: 1px solid #dadbdc; color: #222; }
.grp { display: flex; flex-direction: column; margin: 2px 0 3px; padding-top: 4px; border-right: 1px solid #e0e2e4; }
.g1 { width: 256px; padding-left: 4px; }
.g2 { width: 187px; padding-left: 3px; }
.g3 { width: 137px; padding-left: 2px; }
.g4 { width: 127px; padding-left: 2px; }
.g5 { width: 85px; padding-left: 7px; }
.gc { flex: 1; min-height: 0; display: flex; align-items: flex-start; }
.gl { text-align: center; color: #444; }
.g3 .gl { padding-right: 4px; }
.big { display: flex; flex-direction: column; align-items: center; }
.big svg { width: 26px; height: 30px; margin: 3px 0; }
.big .sq { width: 22px; height: 22px; margin: 7px 0; }
.big .wide { width: 28px; }
.big .car, .sm .car { width: 6px; height: 3px; margin: 1px 0; }
.sm .car { margin-left: 2px; }
.w38 { width: 38px; } .w42 { width: 42px; } .w44 { width: 44px; } .w46 { width: 46px; } .w56 { width: 56px; }
.off { color: #808080; }
.col { display: flex; flex-direction: column; align-items: flex-start; }
.sm { display: flex; align-items: center; gap: 3px; height: 22px; }
.sm svg { width: 16px; height: 16px; }
.paste { width: 50px; }
.paste .sm { padding-left: 6px; gap: 2px; }
.stack { padding-left: 6px; }
.tight { padding-left: 3px; }
.stack, .tight, .sel { margin-top: -2px; }
.loose { padding-left: 3px; }
.loose .sm { height: 25px; }
.vbar { width: 1px; height: 54px; margin: 9px 0 0 5px; background: #dcdfe2; }

.navrow { display: grid; grid-template-columns: 106px minmax(0, 573fr) minmax(0, 268fr); align-items: center; flex: none; height: 34px; }
.navbtns { display: flex; align-items: center; padding-left: 4px; color: #666; }
.navbtns button { width: 30px; display: grid; place-items: center; }
.navbtns .nar { width: 16px; }
.navbtns button:last-child { width: 26px; }
.navbtns svg { width: 14px; height: 14px; }
.navbtns .mini { width: 8px; height: 5px; }
.addr { display: flex; align-items: center; height: 24px; border: 1px solid #d9d9d9; padding-left: 4px; color: #000; }
.mosaic { width: 350px; height: 20px; margin-right: 9px; }
.sep { width: 5px; height: 8px; margin: 0 10px; }
.ddl { margin-left: auto; padding: 0 3px; color: #555; }
.ddl svg { width: 10px; height: 6px; }
.rf { width: 17px; height: 22px; border-left: 1px solid #d9d9d9; display: grid; place-items: center; }
.rf svg { width: 12px; height: 12px; }
.search { height: 24px; margin-left: 12px; padding: 0 9px; border: 1px solid #d9d9d9; border-right: 0; }
.search::placeholder { color: #6d6d6d; opacity: 1; }

.expbody { flex: 1; min-height: 0; display: flex; }
.tree { width: 140px; flex: none; overflow: hidden; color: #000; }
.tree li { display: flex; align-items: center; height: 24px; gap: 5px; padding: 0 4px 0 32px; }
.tree li svg { width: 16px; height: 18px; }
.tree li .pn { width: 11px; height: 11px; margin-left: auto; }
.tree .root { padding-left: 24px; margin-top: 8px; }
.scroll { width: 15px; flex: none; background: #f0f0f0; display: flex; flex-direction: column; align-items: center; padding-top: 7px; }
.scroll svg { width: 10px; height: 6px; }
.scroll i { flex: 1; width: 15px; margin-top: 51px; background: #cdcdcd; }
.files { flex: 1; min-width: 0; margin-left: 3px; padding-left: 12px; border-left: 1px solid #f0f0f0; }
table { width: 100%; table-layout: fixed; border-collapse: separate; border-spacing: 0; }
.c1 { width: 261px; } .c2 { width: 144px; } .c3 { width: 120px; } .c4 { width: 80px; }
th { position: relative; height: 28px; padding: 0 6px; text-align: left; font-weight: 400; color: #4c607a; border-right: 1px solid #e5e5e5; }
th.last { border: 0; }
.sort { position: absolute; top: 0; left: 125px; width: 10px; height: 6px; }
tbody::before { content: ""; display: block; height: 6px; }
td { height: 21px; padding: 0 6px; color: #6d6d6d; white-space: nowrap; }
td:first-child { display: flex; align-items: center; gap: 5px; padding-left: 8px; color: #000; }
td svg { width: 14px; height: 17px; }

.mark { position: absolute; border: 3px solid #fc3a3a; }
.m1 { left: 25px; top: 145px; width: 203px; height: 33px; }
.m2 { left: 39px; top: 190px; width: 161px; height: 132px; }
.m3 { left: 442px; top: 340px; width: 500px; height: 154px; }
.arrow { position: absolute; left: 213px; top: 277px; width: 224px; height: 127px; }
```
